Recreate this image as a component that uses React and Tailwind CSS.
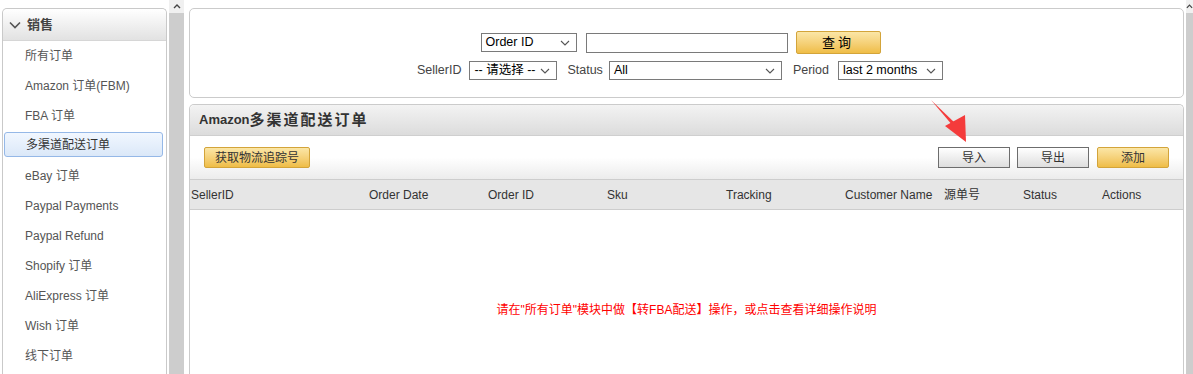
import React from "react";

const FONT = { fontFamily: '"Liberation Sans", Arial, "Noto Sans CJK SC", sans-serif' };

const menu = [
  "所有订单",
  "Amazon 订单(FBM)",
  "FBA 订单",
  "多渠道配送订单",
  "eBay 订单",
  "Paypal Payments",
  "Paypal Refund",
  "Shopify 订单",
  "AliExpress 订单",
  "Wish 订单",
  "线下订单",
];

const columns = [
  ["SellerID", "w-[178px]"],
  ["Order Date", "w-[119px]"],
  ["Order ID", "w-[119px]"],
  ["Sku", "w-[119px]"],
  ["Tracking", "w-[119px]"],
  ["Customer Name", "w-[99px]"],
  ["源单号", "w-[79px]"],
  ["Status", "w-[79px]"],
  ["Actions", "flex-1"],
];

function Chevron() {
  return (
    <svg width="10" height="6" viewBox="0 0 10 6" className="shrink-0">
      <path d="M1 1l4 4 4-4" fill="none" stroke="#555" strokeWidth="1.1" />
    </svg>
  );
}

function FakeSelect({ value, className }) {
  return (
    <div
      className={`flex h-[19px] shrink-0 items-center justify-between border border-[#7a7a7a] bg-white pl-[4px] pr-[6px] text-[12.5px] text-black ${className}`}
    >
      <span className="whitespace-nowrap">{value}</span>
      <Chevron />
    </div>
  );
}

function Sidebar() {
  return (
    <div className="mt-[8px] ml-[2px] w-[165px] shrink-0 rounded-t-[5px] border border-b-0 border-[#c9c9c9] bg-white">
      <div className="flex h-[32px] items-center gap-[6px] rounded-t-[5px] border-b border-[#d6d6d6] bg-gradient-to-b from-white to-[#e2e2e2] pl-[6px]">
        <svg width="12" height="8" viewBox="0 0 12 8">
          <path d="M1 1.5l5 5 5-5" fill="none" stroke="#555" strokeWidth="1.6" />
        </svg>
        <span className="text-[13px] font-bold text-[#444]">销售</span>
      </div>
      {menu.map((m) =>
        m === "多渠道配送订单" ? (
          <div key={m} className="flex h-[30px] items-start">
            <div className="mt-[1px] ml-[1px] mr-[3px] flex h-[25px] flex-1 items-center rounded-[3px] border border-[#95b8e7] bg-gradient-to-b from-[#f1f7ff] to-[#dbe8f8] pl-[21px] text-[12px] text-[#333]">
              {m}
            </div>
          </div>
        ) : (
          <div key={m} className="flex h-[30px] items-center pl-[22px] text-[12px] text-[#555]">
            {m}
          </div>
        )
      )}
    </div>
  );
}

function ScrollBar({ wide }) {
  return (
    <div className={`flex h-full flex-col ${wide ? "w-[15px]" : "w-[7px]"}`}>
      <div className="flex h-[13px] items-center justify-center bg-[#f0f0f0]">
        <svg width="8" height="5" viewBox="0 0 8 5">
          <path d="M1 4l3-3 3 3" fill="none" stroke="#444" strokeWidth="1.4" />
        </svg>
      </div>
      <div className="flex-1 bg-[#cdcdcd]" />
    </div>
  );
}

function YellowBtn({ children, className }) {
  return (
    <button
      className={`flex shrink-0 items-center justify-center rounded-[2px] border border-[#d3a43a] bg-gradient-to-b from-[#fbe6a6] to-[#efbd45] text-[12px] text-[#333] ${className}`}
    >
      {children}
    </button>
  );
}

function GrayBtn({ children }) {
  return (
    <button className="flex h-[21px] w-[72px] items-center justify-center border border-[#6d6d6d] bg-gradient-to-b from-white to-[#dedede] text-[12px] text-[#333]">
      {children}
    </button>
  );
}

export default function App() {
  return (
    <div className="relative flex h-[374px] w-[1193px] overflow-hidden bg-white" style={FONT}>
      <Sidebar />
      <div className="ml-[2px]">
        <ScrollBar wide />
      </div>
      <div className="ml-[5px] flex w-[995px] shrink-0 flex-col">
        {/* search panel */}
        <div className="mt-[8px] flex h-[90px] shrink-0 flex-col items-center rounded-[5px] border border-[#cbcbcb] pt-[22px]">
          <div className="ml-[-12px] flex items-center">
            <FakeSelect value="Order ID" className="w-[96px]" />
            <div className="ml-[9px] h-[20px] w-[202px] border border-[#7a7a7a]" />
            <YellowBtn className="ml-[8px] h-[23px] w-[85px] text-[13px] tracking-[3px] text-black">查询</YellowBtn>
          </div>
          <div className="mt-[7px] ml-[-13px] flex items-center text-[12.5px] text-[#444]">
            <span>SellerID</span>
            <FakeSelect value="-- 请选择 --" className="ml-[8px] w-[88px]" />
            <span className="ml-[10px]">Status</span>
            <FakeSelect value="All" className="ml-[6px] w-[173px]" />
            <span className="ml-[11px]">Period</span>
            <FakeSelect value="last 2 months" className="ml-[9px] w-[105px]" />
          </div>
        </div>

        {/* list panel */}
        <div className="mt-[6px] flex shrink-0 flex-col rounded-t-[5px] border border-b-0 border-[#cbcbcb]">
          <div className="flex h-[31px] items-center rounded-t-[5px] border-b border-[#cfcfcf] bg-gradient-to-b from-[#f3f3f3] to-[#dcdcdc] pl-[9px] text-[13px] font-bold text-[#333]">
            Amazon<span className="text-[15px] tracking-[2px]">多渠道配送订单</span>
          </div>
          <div className="flex h-[43px] items-center bg-gradient-to-b from-white from-50% to-[#ececec] pl-[14px] pr-[14px]">
            <YellowBtn className="h-[21px] w-[106px]">获取物流追踪号</YellowBtn>
            <div className="ml-auto flex items-center gap-[7px]">
              <GrayBtn>导入</GrayBtn>
              <GrayBtn>导出</GrayBtn>
              <YellowBtn className="ml-[1px] h-[21px] w-[72px]">添加</YellowBtn>
            </div>
          </div>
          <div className="flex h-[31px] items-center border-y border-[#cdcdcd] bg-[#e6e6e6] text-[12px] text-[#333]">
            {columns.map(([c, w]) => (
              <div key={c} className={`${w} pl-[1px] whitespace-nowrap`}>
                {c}
              </div>
            ))}
          </div>
          <div className="flex h-[200px] items-center justify-center text-[12px] text-[#ff0000]">
            请在"所有订单"模块中做【转FBA配送】操作，或点击查看详细操作说明
          </div>
        </div>
      </div>
      <div className="ml-auto">
        <ScrollBar />
      </div>

      {/* annotation arrow */}
      <svg className="absolute left-[925px] top-[96px]" width="50" height="50" viewBox="0 0 50 50">
        <path d="M6 4 L28 30 L31 28 Z" fill="#f43b3b" />
        <path d="M20 30 L40 19 L41 46 Z" fill="#f43b3b" />
      </svg>
    </div>
  );
}
